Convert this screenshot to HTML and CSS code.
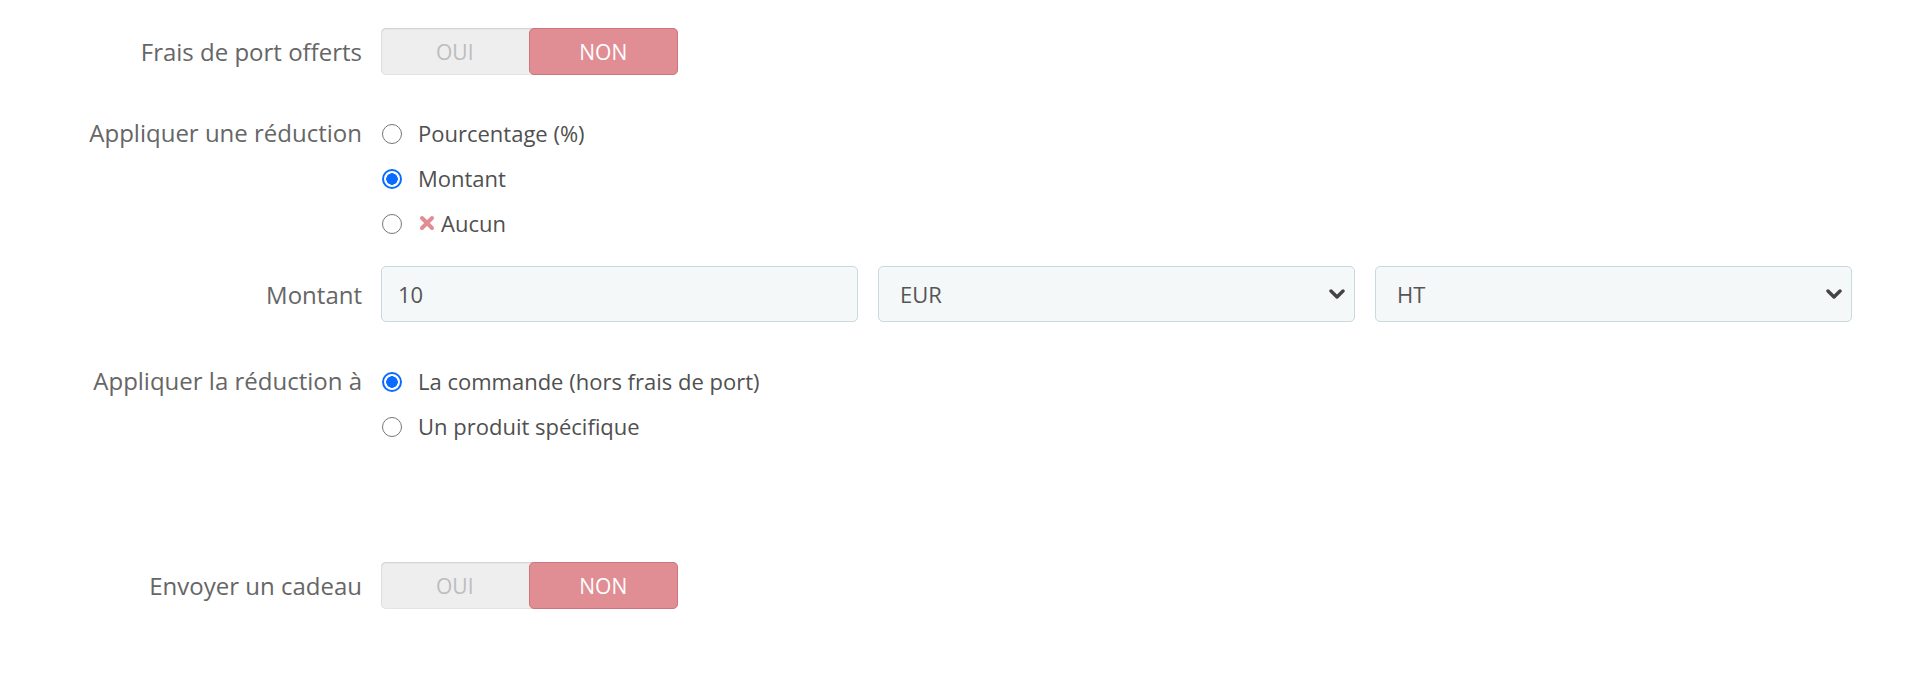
FILE: index.html
```html
<!DOCTYPE html>
<html lang="fr">
<head>
<meta charset="utf-8">
<title>Réduction</title>
<link rel="stylesheet" href="styles.css">
</head>
<body>
<form class="form">
  <div class="row row-toggle1">
    <div class="label">Frais de port offerts</div>
    <div class="control">
      <div class="switch">
        <span class="switch-opt off">OUI</span>
        <span class="switch-opt on">NON</span>
      </div>
    </div>
  </div>

  <div class="row row-radios1">
    <div class="label label-top">Appliquer une réduction</div>
    <div class="control radios">
      <label class="radio"><span class="dot"></span><span class="rtext">Pourcentage (%)</span></label>
      <label class="radio"><span class="dot checked"></span><span class="rtext">Montant</span></label>
      <label class="radio"><span class="dot"></span><span class="rtext"><svg class="xicon" viewBox="0 0 16 16" width="16" height="16"><path d="M3 3 L13 13 M13 3 L3 13" stroke="#e08e94" stroke-width="4" stroke-linecap="round"/></svg>Aucun</span></label>
    </div>
  </div>

  <div class="row row-inputs">
    <div class="label">Montant</div>
    <div class="control fields">
      <div class="field">10</div>
      <div class="field select">EUR<svg class="chev" viewBox="0 0 16 10" width="16" height="10"><path d="M2 2 L8 8 L14 2" fill="none" stroke="#444" stroke-width="3.4" stroke-linecap="round" stroke-linejoin="round"/></svg></div>
      <div class="field select">HT<svg class="chev" viewBox="0 0 16 10" width="16" height="10"><path d="M2 2 L8 8 L14 2" fill="none" stroke="#444" stroke-width="3.4" stroke-linecap="round" stroke-linejoin="round"/></svg></div>
    </div>
  </div>

  <div class="row row-radios2">
    <div class="label label-top">Appliquer la réduction à</div>
    <div class="control radios">
      <label class="radio"><span class="dot checked"></span><span class="rtext">La commande (hors frais de port)</span></label>
      <label class="radio"><span class="dot"></span><span class="rtext">Un produit spécifique</span></label>
    </div>
  </div>

  <div class="row row-toggle2">
    <div class="label">Envoyer un cadeau</div>
    <div class="control">
      <div class="switch">
        <span class="switch-opt off">OUI</span>
        <span class="switch-opt on">NON</span>
      </div>
    </div>
  </div>
</form>
</body>
</html>
```

FILE: styles.css
```css
* { box-sizing: border-box; }
html, body { margin: 0; padding: 0; background: #fff; }
body {
  font-family: "Open Sans", "Liberation Sans", sans-serif;
  color: #555;
  width: 1920px;
  height: 675px;
  overflow: hidden;
}
.form { padding-top: 28px; }
.row {
  display: grid;
  grid-template-columns: 362px 1fr;
  column-gap: 19px;
  align-items: center;
}
.label {
  text-align: right;
  font-size: 24px;
  color: #666;
  white-space: nowrap;
}
.label-top { align-self: start; line-height: 44px; }
.row-toggle1 { margin-bottom: 36px; }
.row-radios1 { margin-bottom: 20px; }
.row-inputs { margin-bottom: 37px; }
.row-radios2 { margin-bottom: 113px; }

.switch {
  display: flex;
  width: 297px;
  height: 47px;
  border-radius: 5px;
  background: #eeeeee;
  box-shadow: inset 0 1px 2px rgba(0,0,0,0.10), inset 0 0 0 1px #e4e4e4;
}
.switch-opt {
  flex: 1;
  display: flex;
  align-items: center;
  justify-content: center;
  font-size: 21px;
}
.switch-opt.off { color: #bdbdbd; }
.switch-opt.on {
  background: #e08e94;
  border: 1px solid #cf747a;
  border-radius: 5px;
  color: #fff;
}

.radios { display: flex; flex-direction: column; }
.radio {
  display: flex;
  align-items: center;
  height: 45px;
  font-size: 22px;
  line-height: 1;
  color: #505050;
}
.rtext { display: flex; align-items: center; padding-bottom: 2px; }
.dot {
  width: 20px;
  height: 20px;
  border-radius: 50%;
  border: 1.5px solid #767676;
  background: #fff;
  margin-left: 1px;
  margin-right: 16px;
  flex: none;
}
.dot.checked {
  border: 2px solid #0a6cff;
  background: radial-gradient(circle, #0a6cff 0 5.5px, #fff 6px);
}
.xicon { margin-right: 6px; margin-left: 1px; }

.fields {
  display: grid;
  grid-template-columns: repeat(3, 477px);
  column-gap: 20px;
}
.field {
  height: 56px;
  border: 1.5px solid #c9d9de;
  border-radius: 5px;
  background: #f5f8f9;
  font-size: 22px;
  color: #555;
  display: flex;
  align-items: center;
  padding-left: 16px;
}
.field.select { justify-content: space-between; padding-left: 21px; padding-right: 9px; }
```
